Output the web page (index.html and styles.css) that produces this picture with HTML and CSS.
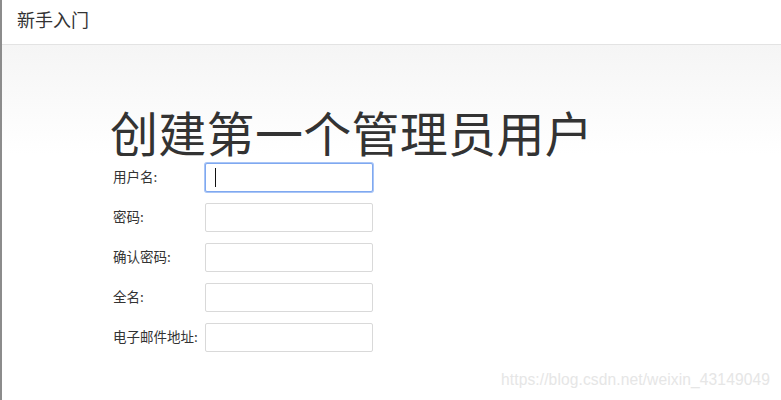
FILE: index.html
```html
<!DOCTYPE html>
<html lang="zh-CN">
<head>
<meta charset="utf-8">
<title>新手入门</title>
<link rel="stylesheet" href="styles.css">
</head>
<body>
<div class="page">
  <header class="topbar">新手入门</header>
  <main class="main">
    <h1 class="title">创建第一个管理员用户</h1>
    <form class="form">
      <div class="row">
        <label class="label">用户名:</label>
        <span class="field focused"><input class="input" type="text"><span class="caret"></span></span>
      </div>
      <div class="row">
        <label class="label">密码:</label>
        <span class="field"><input class="input" type="password"></span>
      </div>
      <div class="row">
        <label class="label">确认密码:</label>
        <span class="field"><input class="input" type="password"></span>
      </div>
      <div class="row">
        <label class="label">全名:</label>
        <span class="field"><input class="input" type="text"></span>
      </div>
      <div class="row">
        <label class="label">电子邮件地址:</label>
        <span class="field"><input class="input" type="text"></span>
      </div>
    </form>
  </main>
  <div class="watermark">https://blog.csdn.net/weixin_43149049</div>
</div>
</body>
</html>
```

FILE: styles.css
```css
html, body {
  margin: 0;
  padding: 0;
  height: 100%;
  background: #fff;
}
body {
  font-family: "Noto Sans CJK SC", "Noto Sans", sans-serif;
  color: #333;
}
.page {
  position: relative;
  height: 400px;
  border-left: 2px solid #8c8c8c;
  box-sizing: border-box;
  overflow: hidden;
}
.topbar {
  height: 45px;
  box-sizing: border-box;
  border-bottom: 1px solid #e3e3e3;
  padding-left: 15px;
  font-size: 18px;
  line-height: 38px;
  color: #333;
  background: #fff;
}
.main {
  height: 355px;
  background: linear-gradient(to bottom, #f5f5f5 0px, #ffffff 110px);
  padding-left: 108px;
  padding-top: 54px;
  box-sizing: border-box;
}
.title {
  margin: 0;
  font-size: 48px;
  font-weight: 400;
  line-height: 64px;
  color: #333;
  letter-spacing: 0.3px;
}
.form {
  margin: 0;
}
.row {
  display: flex;
  align-items: center;
  height: 29px;
  margin-bottom: 11px;
}
.label {
  width: 95px;
  padding-left: 3px;
  padding-bottom: 3px;
  box-sizing: border-box;
  font-size: 13.5px;
  color: #333;
  white-space: nowrap;
}
.field {
  position: relative;
  display: block;
  width: 168px;
  height: 29px;
}
.input {
  display: block;
  width: 168px;
  height: 29px;
  box-sizing: border-box;
  margin: 0;
  padding: 0 8px;
  border: 1px solid #d9d9d9;
  border-radius: 2px;
  background: #fff;
  outline: none;
  font-size: 13px;
}
.focused .input {
  border-color: #7fa8f0;
  box-shadow: 0 0 0 1px #a9c5f6;
}
.caret {
  position: absolute;
  left: 10px;
  top: 5px;
  width: 1px;
  height: 19px;
  background: #111;
}
.watermark {
  position: absolute;
  right: 11px;
  bottom: 11px;
  font-family: "Liberation Sans", Arial, sans-serif;
  font-size: 15.6px;
  color: #e6e6e6;
  letter-spacing: 0.1px;
}
```
